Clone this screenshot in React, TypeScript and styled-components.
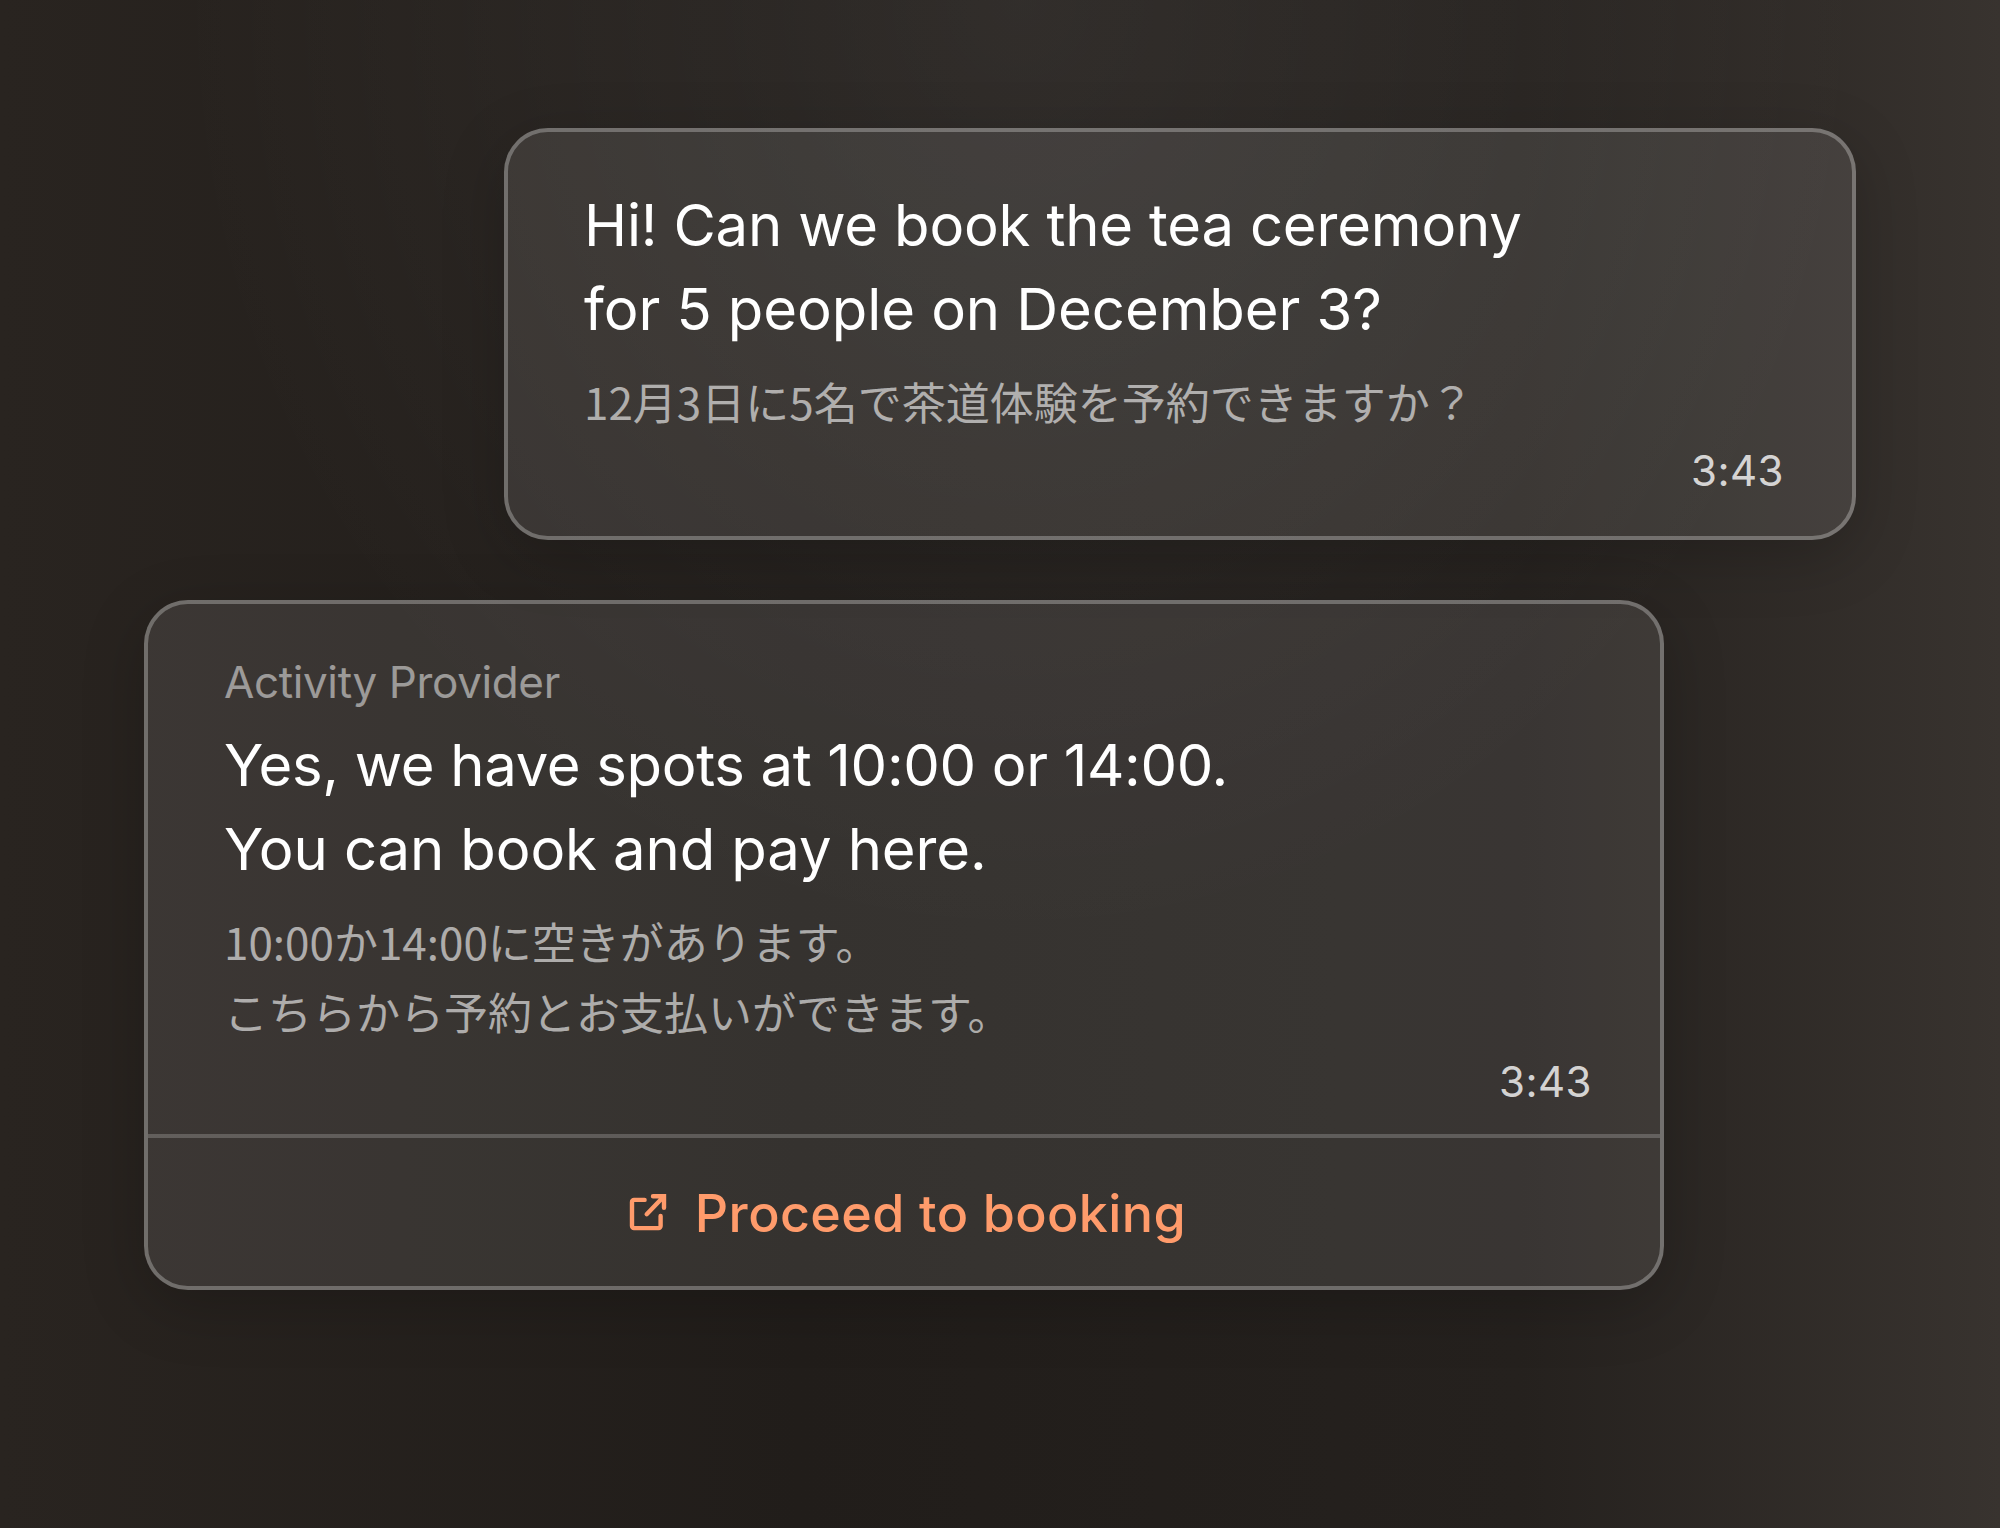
import React from 'react';
import styled, { createGlobalStyle } from 'styled-components';

const GlobalStyle = createGlobalStyle`
  * {
    box-sizing: border-box;
  }

  body {
    margin: 0;
    font-family: Inter, "Noto Sans CJK JP", sans-serif;
  }

  p {
    margin: 0;
  }
`;

const Screen = styled.main`
  height: 1528px;
  display: flex;
  flex-direction: column;
  gap: 60px;
  padding: 128px 144px 0;
  background:
    radial-gradient(ellipse 850px 950px at 51% 0%, rgba(255, 255, 255, 0.07), transparent),
    linear-gradient(90deg, #292420 0%, #211d1a 40%, #25211e 76%, #38332f 100%);
`;

const Bubble = styled.article<{ $mine?: boolean }>`
  align-self: ${({ $mine }) => ($mine ? 'flex-end' : 'flex-start')};
  width: ${({ $mine }) => ($mine ? 1352 : 1520)}px;
  height: ${({ $mine }) => ($mine ? 412 : 690)}px;
  display: flex;
  flex-direction: column;
  border: 4px solid rgba(255, 255, 255, 0.34);
  border-radius: 44px;
  background: rgba(255, 255, 255, 0.095);
  background-clip: padding-box;
  box-shadow: 0 16px 64px rgba(0, 0, 0, 0.2);
`;

const Body = styled.div<{ $top: number }>`
  flex: 1;
  display: flex;
  flex-direction: column;
  padding: ${({ $top }) => $top}px 68px 0 76px;
`;

const Sender = styled.p`
  margin-bottom: 11px;
  font-size: 44px;
  line-height: 60px;
  letter-spacing: -0.38px;
  color: rgba(255, 255, 255, 0.5);
`;

const Message = styled.p<{ $tracking: number }>`
  font-size: 58px;
  line-height: 84px;
  letter-spacing: ${({ $tracking }) => $tracking}px;
  color: #fff;
`;

const Translation = styled.p`
  margin-top: 15px;
  font-family: "Noto Sans CJK JP", sans-serif;
  font-size: 44px;
  line-height: 70.4px;
  color: rgba(255, 255, 255, 0.6);
`;

const Time = styled.time`
  align-self: flex-end;
  margin-top: 3px;
  font-size: 42px;
  line-height: 64px;
  letter-spacing: 0.45px;
  color: rgba(255, 255, 255, 0.8);
`;

const BookingButton = styled.button`
  height: 152px;
  display: flex;
  align-items: center;
  justify-content: center;
  gap: 21px;
  padding: 0;
  border: none;
  border-top: 4px solid rgba(255, 255, 255, 0.2);
  background: none;
  font-family: inherit;
  font-size: 52px;
  font-weight: 500;
  letter-spacing: 0.4px;
  color: #ff9b6b;
`;

const ButtonLabel = styled.span`
  padding-top: 2px;
`;

const LinkIcon = () => (
  <svg width="52" height="52" viewBox="0 0 52 52" fill="none" stroke="currentColor" strokeWidth="4.4" strokeLinecap="round">
    <path d="M22.6 13.9H12a2 2 0 0 0-2 2v24.2a2 2 0 0 0 2 2h24.6a2 2 0 0 0 2-2V29.9" />
    <path d="M31 10.2h11v11.6M41.5 10.7L24.7 28.2" />
  </svg>
);

const App = () => {
  return (
    <>
      <GlobalStyle />
      <Screen>
        <Bubble $mine>
          <Body $top={51}>
            <Message $tracking={-0.19}>Hi! Can we book the tea ceremony</Message>
            <Message $tracking={-0.07}>for 5 people on December 3?</Message>
            <Translation lang="ja">12月3日に5名で茶道体験を予約できますか？</Translation>
            <Time>3:43</Time>
          </Body>
        </Bubble>

        <Bubble>
          <Body $top={48}>
            <Sender>Activity Provider</Sender>
            <Message $tracking={-0.33}>Yes, we have spots at 10:00 or 14:00.</Message>
            <Message $tracking={-0.1}>You can book and pay here.</Message>
            <Translation lang="ja">
              10:00か14:00に空きがあります。
              <br />
              こちらから予約とお支払いができます。
            </Translation>
            <Time>3:43</Time>
          </Body>
          <BookingButton type="button">
            <LinkIcon />
            <ButtonLabel>Proceed to booking</ButtonLabel>
          </BookingButton>
        </Bubble>
      </Screen>
    </>
  );
};

export default App;
